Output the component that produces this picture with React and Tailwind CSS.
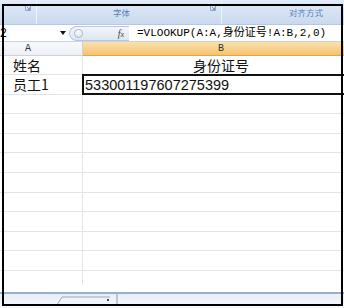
export default function App() {
  const rows = Array.from({ length: 12 });
  const cjk = { fontFamily: '"Noto Sans CJK SC", "Noto Sans", sans-serif' };
  const mono = { fontFamily: '"Liberation Mono", "Noto Sans CJK SC", monospace' };
  const sans = { fontFamily: '"Liberation Sans", Arial, sans-serif' };
  return (
    <div className="relative w-[344px] h-[308px] overflow-hidden bg-white">
      {/* ribbon group labels */}
      <div className="flex h-[25px] bg-gradient-to-b from-[#e2ecf9] to-[#c9d9ef] border-b border-[#b4c8e0]">
        <div className="w-[37px] flex justify-end items-start pt-[5px] pr-[5px] border-r border-[#eef4fb]">
          <Launcher />
        </div>
        <div className="w-[185px] flex items-center border-r border-[#eef4fb]">
          <div className="flex-1 text-center text-[8.5px] text-[#5a7fb5] pr-[4px]" style={cjk}>字体</div>
          <div className="self-start pt-[5px] pr-[5px]"><Launcher /></div>
        </div>
        <div className="flex-1 flex items-center justify-end pr-[21px] text-[8.5px] text-[#5a7fb5]" style={cjk}>
          对齐方式
        </div>
      </div>
      {/* formula bar */}
      <div className="flex h-[17px] bg-white border-b border-[#c5d3e6] items-center">
        <div className="w-[58px] text-[12px] text-black leading-none" style={sans}>2</div>
        <div className="w-[10px] flex items-center justify-center">
          <svg width="6" height="4" viewBox="0 0 6 4"><path d="M0 0 L6 0 L3 4 Z" fill="#111" /></svg>
        </div>
        <div className="w-[60px] h-[15px] ml-[1px] rounded-l-full bg-gradient-to-b from-[#f3f6fb] to-[#dde6f2] border border-r-0 border-[#b9c7da] flex items-center">
          <div className="w-[9px] h-[9px] ml-[4px] rounded-full border border-[#a8b6c8] bg-gradient-to-b from-white to-[#dfe6ef]" />
          <div className="ml-auto mr-[5px] text-[10px] italic text-[#444]" style={{ fontFamily: '"Liberation Serif", serif' }}>
            f<span className="text-[8px]">x</span>
          </div>
        </div>
        <div className="flex-1 h-[17px] flex items-center pl-[8px] text-[11px] text-black whitespace-nowrap" style={mono}>
          =VLOOKUP(A:A,身份证号!A:B,2,0)
        </div>
      </div>
      {/* column headers */}
      <div className="flex h-[14px]">
        <div className="w-[83px] bg-gradient-to-b from-[#f8f9fb] to-[#eceff4] border-b border-r border-[#c9d2de] flex items-center pl-[25px]">
          <span className="text-[10px] leading-none text-[#333]" style={mono}>A</span>
        </div>
        <div className="flex-1 bg-gradient-to-b from-[#fbe1ae] to-[#f4c26c] border-b border-[#e2a64a] flex items-center pl-[135px]">
          <span className="text-[10px] leading-none text-[#333]" style={mono}>B</span>
        </div>
      </div>
      {/* grid */}
      <div className="flex flex-col">
        {rows.map((_, i) => {
          const h = i === 0 ? 'h-[19px]' : 'h-[19.6px]';
          return (
            <div key={i} className={`flex ${h} border-b border-[#e2e4ec]`}>
              <div className="w-[83px] border-r border-[#e2e4ec] flex items-center pl-[13px]">
                {i === 0 && <span className="text-[14px] text-[#111]" style={cjk}>姓名</span>}
                {i === 1 && <span className="text-[14px] text-[#111]" style={cjk}>员工1</span>}
              </div>
              <div className="flex-1 flex items-center relative">
                {i === 0 && (
                  <span className="absolute left-[138px] -translate-x-1/2 text-[14px] text-[#111]" style={cjk}>身份证号</span>
                )}
                {i === 1 && (
                  <div className="absolute -left-[1px] -top-[1px] right-[-4px] -bottom-[1px] border-2 border-[#111] flex items-center pl-[1px] pt-[1px]">
                    <span className="text-[14.5px] leading-none text-[#111]" style={sans}>533001197607275399</span>
                  </div>
                )}
              </div>
            </div>
          );
        })}
      </div>
      {/* bottom tab bar */}
      <div className="absolute left-0 right-0 top-[285px] h-[7px] bg-white" />
      <div className="absolute left-0 right-0 top-[292px] bottom-0 bg-gradient-to-b from-[#e8eef7] to-[#f7f9fc] border-t-2 border-[#9aafca]">
        <svg className="absolute left-[56px] top-[0px]" width="64" height="12" viewBox="0 0 64 12">
          <path d="M1 11 L6 3 L54 3" fill="none" stroke="#9aa9bd" strokeWidth="1" />
          <rect x="51" y="5" width="2" height="2" fill="#445" />
          <path d="M61 0 L61 12" stroke="#a8b8cc" strokeWidth="1.5" />
        </svg>
      </div>
      {/* annotation frame */}
      <div className="absolute left-[2px] top-[4px] w-[341px] h-[302px] border-2 border-black pointer-events-none" />
    </div>
  );
}

function Launcher() {
  return (
    <svg width="6" height="6" viewBox="0 0 6 6">
      <path d="M0.5 0.5 L5.5 0.5 L5.5 5.5 L0.5 5.5 Z" fill="none" stroke="#8fa5c4" strokeWidth="1" />
      <path d="M2 2 L4.5 4.5 M4.5 2.5 L4.5 4.5 L2.5 4.5" fill="none" stroke="#6b86ad" strokeWidth="0.8" />
    </svg>
  );
}
